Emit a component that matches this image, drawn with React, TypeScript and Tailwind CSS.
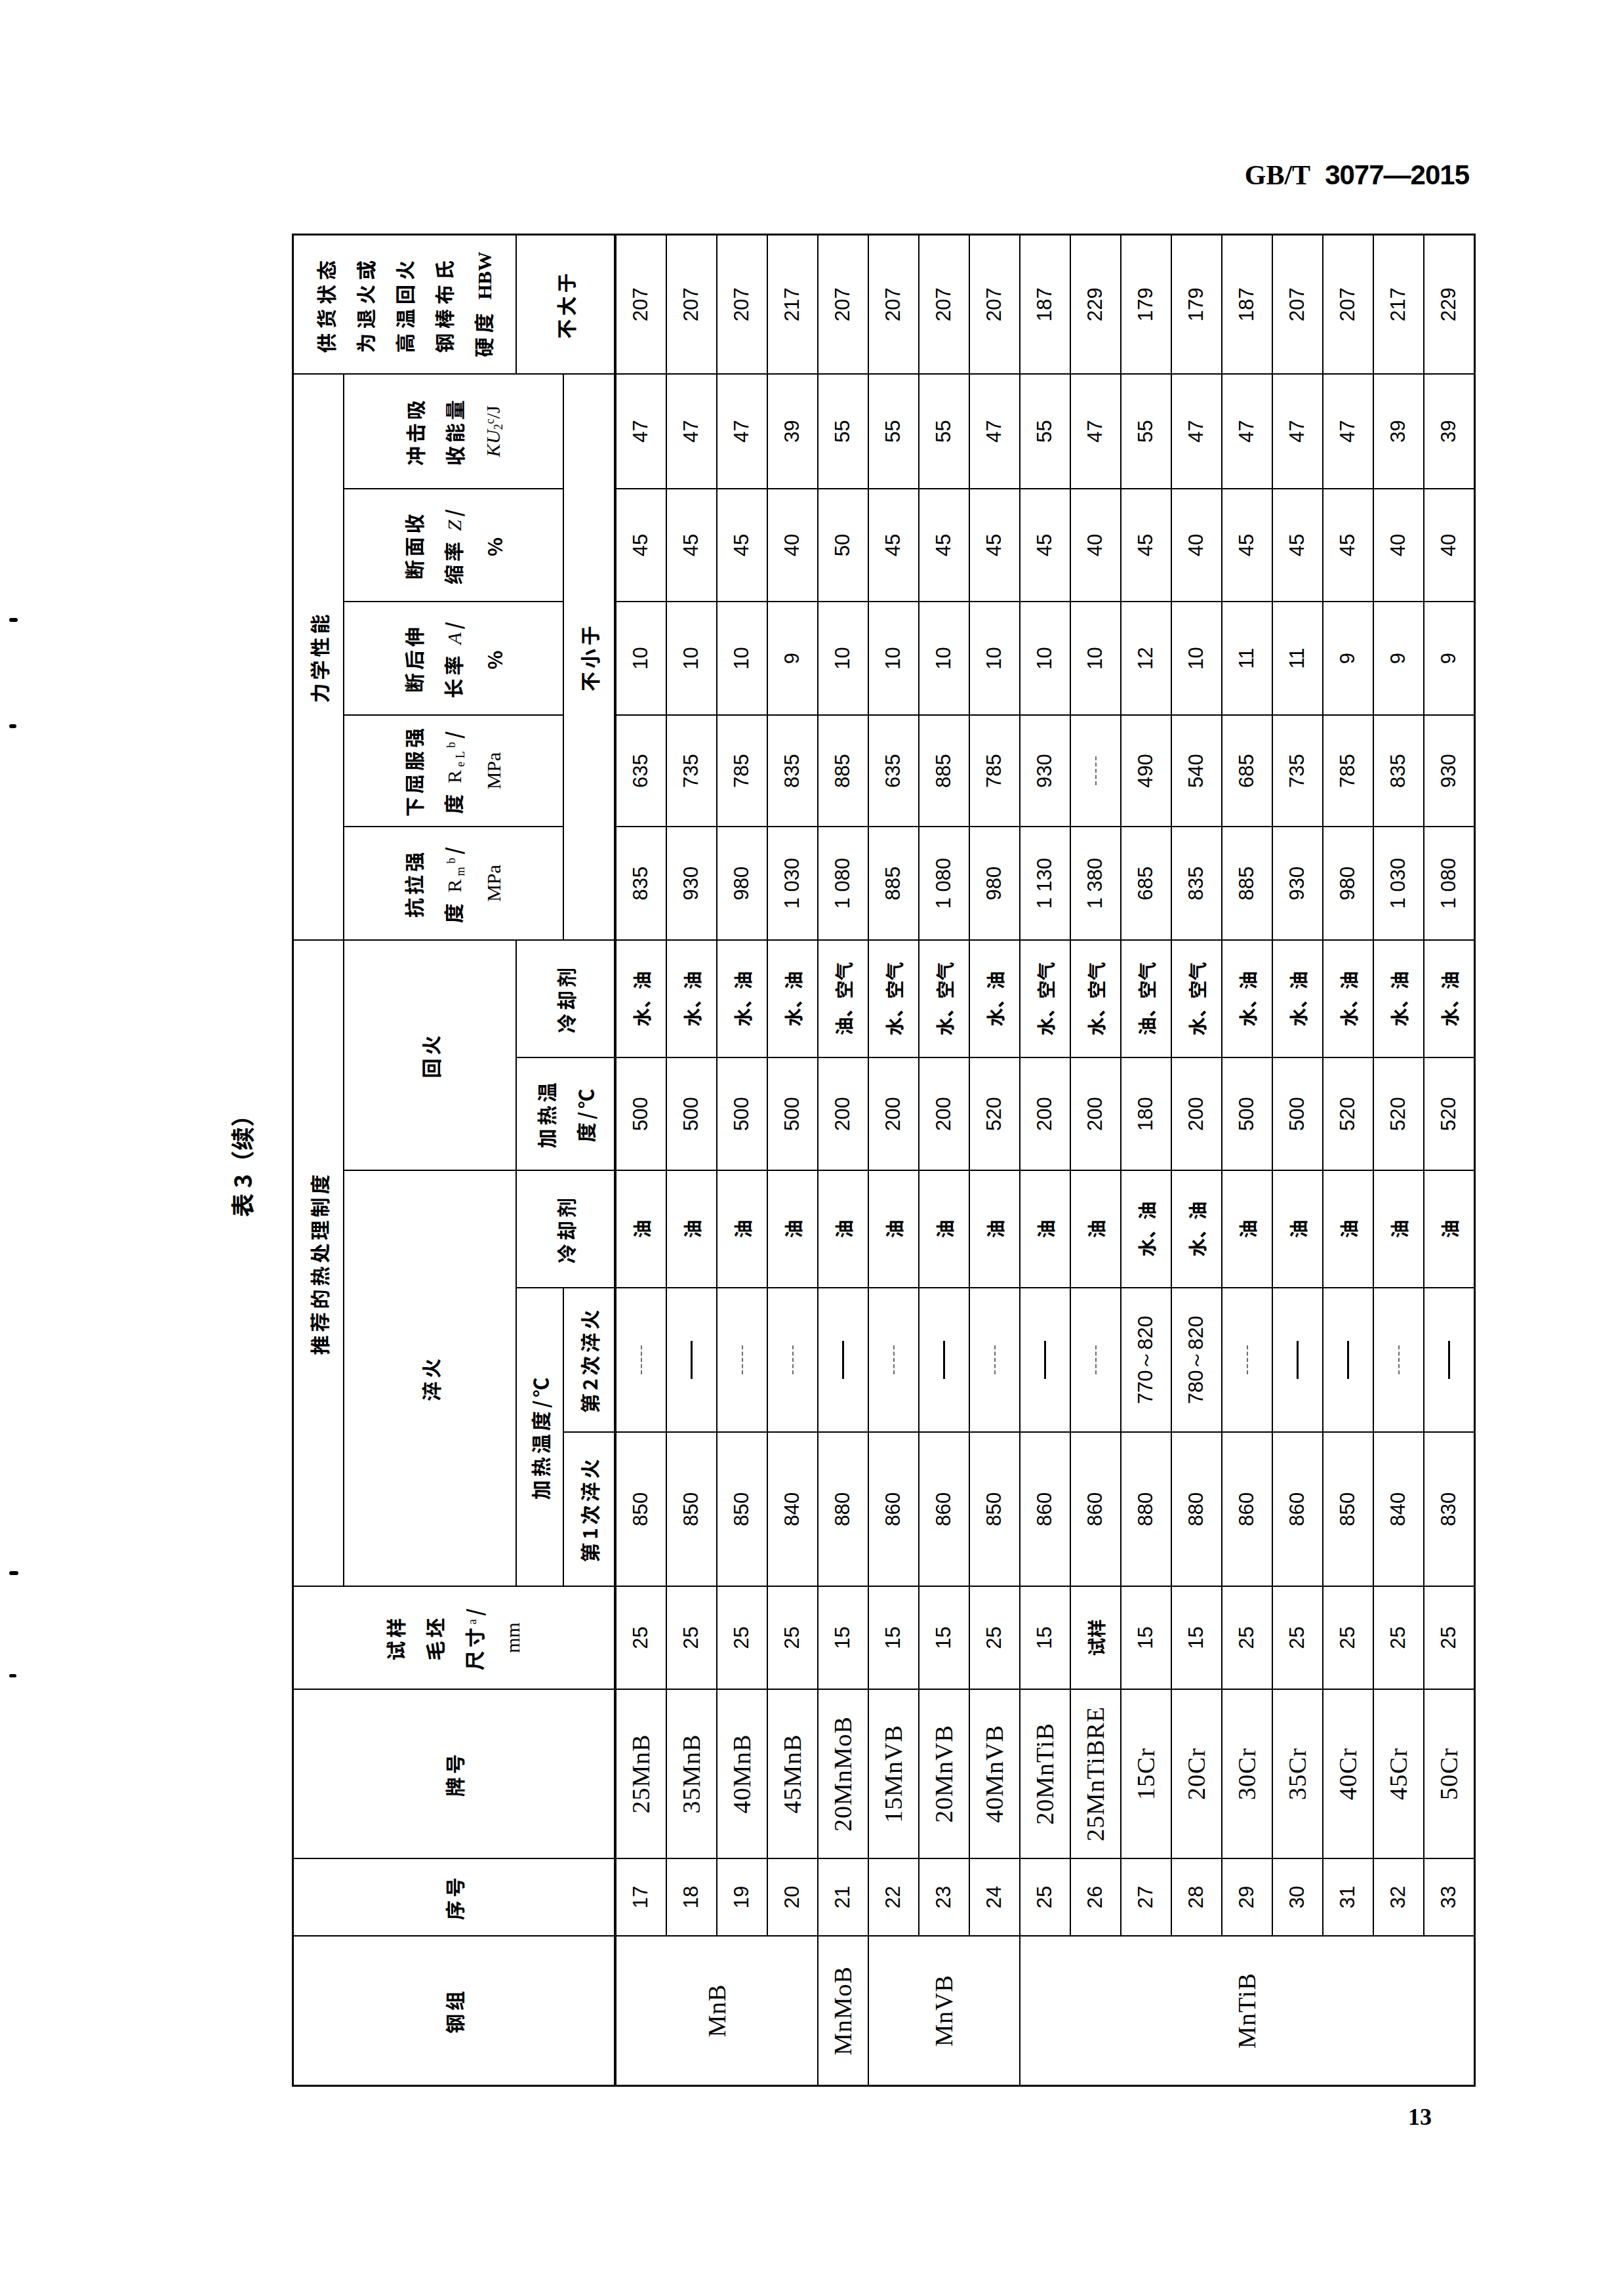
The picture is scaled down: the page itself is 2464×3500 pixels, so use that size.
import React from 'react';

// fonts
const HZ = "font-['Noto_Sans_CJK_SC',sans-serif]";
const NUM = "font-['Liberation_Sans',Arial,sans-serif]";
const SERIF = "font-['Liberation_Serif','Times_New_Roman',serif]";

const COLS =
  'grid-cols-[226px_116px_256px_155px_233px_218px_177px_170px_177px_171px_168px_171px_170px_173px_210px]';

// header cell base
const HC =
  "bg-white flex flex-col items-center justify-center text-center font-bold text-[30px] tracking-[5px] leading-[60px] font-['Noto_Sans_CJK_SC',sans-serif]";

// row data: 序号, 牌号, 尺寸, 第1次淬火, 第2次淬火, 淬火冷却剂, 回火温度, 回火冷却剂, Rm, ReL, A, Z, KU2, HBW
// '—' = solid dash, '-' = faint dash as printed
const rows: string[][] = [
  ['17', '25MnB', '25', '850', '-', '油', '500', '水、油', '835', '635', '10', '45', '47', '207'],
  ['18', '35MnB', '25', '850', '—', '油', '500', '水、油', '930', '735', '10', '45', '47', '207'],
  ['19', '40MnB', '25', '850', '-', '油', '500', '水、油', '980', '785', '10', '45', '47', '207'],
  ['20', '45MnB', '25', '840', '-', '油', '500', '水、油', '1 030', '835', '9', '40', '39', '217'],
  ['21', '20MnMoB', '15', '880', '—', '油', '200', '油、空气', '1 080', '885', '10', '50', '55', '207'],
  ['22', '15MnVB', '15', '860', '-', '油', '200', '水、空气', '885', '635', '10', '45', '55', '207'],
  ['23', '20MnVB', '15', '860', '—', '油', '200', '水、空气', '1 080', '885', '10', '45', '55', '207'],
  ['24', '40MnVB', '25', '850', '-', '油', '520', '水、油', '980', '785', '10', '45', '47', '207'],
  ['25', '20MnTiB', '15', '860', '—', '油', '200', '水、空气', '1 130', '930', '10', '45', '55', '187'],
  ['26', '25MnTiBRE', '试样', '860', '-', '油', '200', '水、空气', '1 380', '-', '10', '40', '47', '229'],
  ['27', '15Cr', '15', '880', '770～820', '水、油', '180', '油、空气', '685', '490', '12', '45', '55', '179'],
  ['28', '20Cr', '15', '880', '780～820', '水、油', '200', '水、空气', '835', '540', '10', '40', '47', '179'],
  ['29', '30Cr', '25', '860', '-', '油', '500', '水、油', '885', '685', '11', '45', '47', '187'],
  ['30', '35Cr', '25', '860', '—', '油', '500', '水、油', '930', '735', '11', '45', '47', '207'],
  ['31', '40Cr', '25', '850', '—', '油', '520', '水、油', '980', '785', '9', '45', '47', '207'],
  ['32', '45Cr', '25', '840', '-', '油', '520', '水、油', '1 030', '835', '9', '40', '39', '217'],
  ['33', '50Cr', '25', '830', '—', '油', '520', '水、油', '1 080', '930', '9', '40', '39', '229'],
];

const groups: Record<number, { name: string; span: string }> = {
  0: { name: 'MnB', span: 'row-span-4' },
  4: { name: 'MnMoB', span: 'row-span-1' },
  5: { name: 'MnVB', span: 'row-span-3' },
  8: { name: 'MnTiB', span: 'row-span-9' },
};

const hasHan = (v: string) => /[\u4e00-\u9fff]/.test(v);

const Val: React.FC<{ v: string }> = ({ v }) => {
  if (v === '—') return <span className="block w-[58px] h-[3px] bg-black" />;
  if (v === '-') return <span className="block w-[44px] border-t-2 border-dashed border-[#6b6b6b]" />;
  return <>{v}</>;
};

function cellClass(j: number, v: string) {
  const base = 'bg-white flex items-center justify-center whitespace-nowrap';
  if (j === 1) return `${base} ${SERIF} text-[38px] tracking-[1px]`;
  if (hasHan(v)) return `${base} ${HZ} text-[28px] font-semibold`;
  return `${base} ${NUM} text-[31px]`;
}

const Header: React.FC = () => (
  <div className={`grid ${COLS} grid-rows-[75px_261px_70px_76px] gap-[2px] bg-black`}>
    <div className={`${HC} col-start-1 row-start-1 row-span-4`}>钢组</div>
    <div className={`${HC} col-start-2 row-start-1 row-span-4`}>序号</div>
    <div className={`${HC} col-start-3 row-start-1 row-span-4`}>牌号</div>
    <div className={`${HC} col-start-4 row-start-1 row-span-4`}>
      <span>试样</span>
      <span>毛坯</span>
      <span>
        尺寸<sup className={`${SERIF} text-[18px] font-normal`}>a</sup>/
      </span>
      <span className={`${SERIF} font-normal tracking-normal`}>mm</span>
    </div>

    <div className={`${HC} col-start-5 col-span-5 row-start-1 tracking-[2px]`}>推荐的热处理制度</div>
    <div className={`${HC} col-start-5 col-span-3 row-start-2`}>淬火</div>
    <div className={`${HC} col-start-5 col-span-2 row-start-3`}>加热温度/℃</div>
    <div className={`${HC} col-start-5 row-start-4`}>第1次淬火</div>
    <div className={`${HC} col-start-6 row-start-4`}>第2次淬火</div>
    <div className={`${HC} col-start-7 row-start-3 row-span-2`}>冷却剂</div>
    <div className={`${HC} col-start-8 col-span-2 row-start-2`}>回火</div>
    <div className={`${HC} col-start-8 row-start-3 row-span-2`}>
      <span>加热温</span>
      <span>度/℃</span>
    </div>
    <div className={`${HC} col-start-9 row-start-3 row-span-2`}>冷却剂</div>

    <div className={`${HC} col-start-10 col-span-5 row-start-1`}>力学性能</div>
    <div className={`${HC} col-start-10 row-start-2 row-span-2`}>
      <span>抗拉强</span>
      <span>
        度 <span className={`${SERIF} font-normal`}>R</span>
        <sub className={`${SERIF} text-[18px] font-normal`}>m</sub>
        <sup className={`${SERIF} text-[18px] font-normal`}>b</sup>/
      </span>
      <span className={`${SERIF} font-normal tracking-normal`}>MPa</span>
    </div>
    <div className={`${HC} col-start-11 row-start-2 row-span-2`}>
      <span>下屈服强</span>
      <span>
        度 <span className={`${SERIF} font-normal`}>R</span>
        <sub className={`${SERIF} text-[18px] font-normal`}>eL</sub>
        <sup className={`${SERIF} text-[18px] font-normal`}>b</sup>/
      </span>
      <span className={`${SERIF} font-normal tracking-normal`}>MPa</span>
    </div>
    <div className={`${HC} col-start-12 row-start-2 row-span-2`}>
      <span>断后伸</span>
      <span>
        长率 <span className={`${SERIF} italic font-normal`}>A</span>/
      </span>
      <span>%</span>
    </div>
    <div className={`${HC} col-start-13 row-start-2 row-span-2`}>
      <span>断面收</span>
      <span>
        缩率 <span className={`${SERIF} italic font-normal`}>Z</span>/
      </span>
      <span>%</span>
    </div>
    <div className={`${HC} col-start-14 row-start-2 row-span-2`}>
      <span>冲击吸</span>
      <span>收能量</span>
      <span className={`${SERIF} font-normal tracking-normal`}>
        <span className="italic">KU</span>
        <sub className="text-[18px]">2</sub>
        <sup className="text-[18px]">c</sup>/J
      </span>
    </div>
    <div className={`${HC} col-start-10 col-span-5 row-start-4`}>不小于</div>

    <div className={`${HC} col-start-15 row-start-1 row-span-2 tracking-[7px]`}>
      <span>供货状态</span>
      <span>为退火或</span>
      <span>高温回火</span>
      <span>钢棒布氏</span>
      <span>
        硬度 <span className={`${SERIF} tracking-normal`}>HBW</span>
      </span>
    </div>
    <div className={`${HC} col-start-15 row-start-3 row-span-2`}>不大于</div>
  </div>
);

const Body: React.FC = () => (
  <div className={`grid ${COLS} grid-rows-[repeat(17,75px)] gap-[2px] bg-black`}>
    {rows.map((r, i) => (
      <React.Fragment key={r[0]}>
        {groups[i] && (
          <div className={`${groups[i].span} bg-white flex items-center justify-center ${SERIF} text-[38px] tracking-[1px]`}>
            {groups[i].name}
          </div>
        )}
        {r.map((v, j) => (
          <div key={j} className={cellClass(j, v)}>
            <Val v={v} />
          </div>
        ))}
      </React.Fragment>
    ))}
  </div>
);

const App: React.FC = () => {
  return (
    <div className="w-[2464px] h-[3500px] bg-white text-black flex">
      {/* left margin with scan marks */}
      <div className="w-[340px] shrink-0 flex flex-col items-start pl-[14px]">
        <span className="mt-[942px] w-[13px] h-[6px] rounded-full bg-black" />
        <span className="mt-[156px] w-[11px] h-[6px] rounded-full bg-black" />
        <span className="mt-[1285px] w-[14px] h-[6px] rounded-full bg-black" />
        <span className="mt-[151px] w-[11px] h-[5px] rounded-full bg-black" />
      </div>

      <div className="w-[1912px] shrink-0 flex flex-col">
        <div className="h-[356px] pt-[246px] pr-[12px] flex justify-end items-start leading-none text-[42px] font-bold">
          <span className={SERIF}>GB/T</span>
          <span className={`${NUM} ml-[22px] tracking-[-1px]`}>3077—2015</span>
        </div>

        {/* landscape table, turned a quarter to the left */}
        <div className="relative w-[1911px] h-[2825px] shrink-0">
          <div className="absolute left-0 top-0 w-[2825px] h-[1911px] origin-top-left [transform:translateY(2825px)_rotate(-90deg)] flex flex-col">
            <div className={`h-[105px] pt-[10px] flex justify-center leading-none text-[36px] font-bold ${HZ}`}>
              表 3（续）
            </div>
            <div className="border-[3px] border-black bg-black flex flex-col gap-[4px]">
              <Header />
              <Body />
            </div>
          </div>
        </div>

        <div className={`mt-[28px] pr-[69px] flex justify-end leading-none text-[36px] font-bold ${SERIF}`}>13</div>
      </div>
    </div>
  );
};

export default App;
